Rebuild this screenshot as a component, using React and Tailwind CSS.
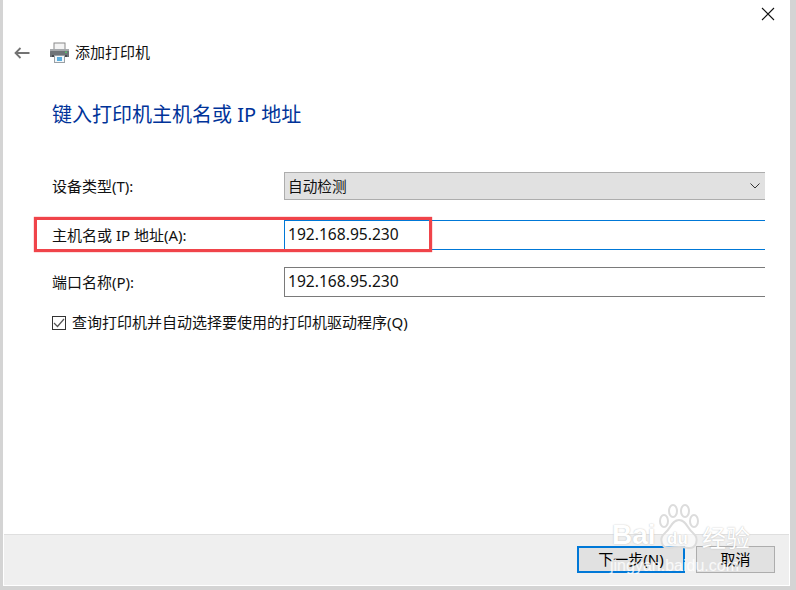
const font = "font-['Noto_Sans','Noto_Sans_CJK_SC',sans-serif]"

const Row = ({ label, children, className = '' }) => (
  <div className={`flex items-center ${className}`}>
    <div className="w-[232px] shrink-0 text-[15px] leading-none text-[#111]">{label}</div>
    {children}
  </div>
)

const PrinterIcon = () => (
  <svg width="21" height="21" viewBox="0 0 21 21">
    <rect x="5" y="1" width="11" height="7" fill="#f4f4f4" stroke="#8a8a8a" />
    <path d="M1 9.5 Q1 7 4 7 H17 Q20 7 20 9.5 V15 H1 Z" fill="#6f7478" />
    <rect x="1" y="7" width="19" height="2" fill="#a6a9ac" />
    <rect x="16" y="9.5" width="2" height="1.5" fill="#57c26b" />
    <rect x="3" y="13" width="15" height="2" fill="#44484c" />
    <rect x="5.5" y="13.5" width="10" height="7" fill="#f2f7fa" stroke="#9aa0a5" />
    <rect x="8" y="15" width="5" height="4" fill="#5aaede" />
  </svg>
)

const halo = '[text-shadow:0_0_1.5px_#b4b4b4]'

const Watermark = () => (
  <div className="absolute left-[610px] top-[502px] w-[150px] h-[80px] pointer-events-none text-white">
    <svg className="absolute left-[47px] top-[2px]" width="44" height="46" viewBox="0 0 44 46" fill="#ffffff" fillOpacity="0.55" stroke="#dcdcdc" strokeWidth="2">
      <ellipse cx="7" cy="17" rx="4" ry="6" />
      <ellipse cx="16" cy="7" rx="4" ry="6" />
      <ellipse cx="28" cy="7" rx="4" ry="6" />
      <ellipse cx="37" cy="17" rx="4" ry="6" />
      <path d="M22 16 C15 16 14 24 8 29 C1 35 5 45 13 44 C18 43 26 43 31 44 C39 45 43 35 36 29 C30 24 29 16 22 16 Z" />
    </svg>
    <span className={`absolute left-[2px] top-[17px] text-[28px] leading-[32px] font-bold font-['Liberation_Sans',sans-serif] ${halo}`}>Bai</span>
    <span className={`absolute left-[57px] top-[27px] text-[17px] leading-[20px] font-bold font-['Liberation_Sans',sans-serif] ${halo}`}>du</span>
    <span className={`absolute left-[92px] top-[20px] text-[24px] leading-[30px] font-['Noto_Sans_CJK_SC',sans-serif] ${halo}`}>经验</span>
    <span className="absolute left-[0px] top-[54px] text-[16px] leading-[20px] font-['Liberation_Sans',sans-serif] whitespace-nowrap text-white/80">jingyan.baidu.com</span>
  </div>
)

export default function App() {
  return (
    <div className={`relative w-[796px] h-[590px] overflow-hidden bg-[#d4d4d4] flex flex-col ${font}`}>
      <div className="flex-1 min-h-0 flex pl-[3px] pr-[6px] pb-[4px]">
        <div className="flex-1 bg-white flex flex-col">
          <div className="flex-1 relative">
            <div className="flex justify-end pt-[7px] pr-[15px] h-[36px]">
              <svg width="14" height="14" viewBox="0 0 14 14" stroke="#111" strokeWidth="1.1" fill="none">
                <path d="M1 1 L13 13 M13 1 L1 13" />
              </svg>
            </div>
            <div className="flex items-center h-[33px]">
              <svg className="ml-[11px]" width="16" height="12" viewBox="0 0 16 12" fill="none" stroke="#737373" strokeWidth="1.8">
                <path d="M15.5 6 H1.5 M6.5 1 L1.5 6 L6.5 11" />
              </svg>
              <div className="ml-[19px]"><PrinterIcon /></div>
              <span className="ml-[5px] text-[15px] leading-none text-[#111]">添加打印机</span>
            </div>
            <div className="ml-[49px] mt-[32px] text-[20px] leading-[28px] text-[#003399]">键入打印机主机名或 IP 地址</div>
            <div className="ml-[49px] mr-[25px] mt-[43px] flex flex-col">
              <Row label="设备类型(T):">
                <div className="flex-1 h-[28px] bg-[#e1e1e1] border-y border-l border-[#adadad] flex items-center justify-between pl-[3px] pr-[5px] text-[14.67px] text-[#111]">
                  <span>自动检测</span>
                  <svg width="10" height="6" viewBox="0 0 10 6" fill="none" stroke="#333" strokeWidth="1"><path d="M0.5 0.5 L5 5 L9.5 0.5" /></svg>
                </div>
              </Row>
              <Row label="主机名或 IP 地址(A):" className="mt-[20px]">
                <div className="flex-1 h-[30px] bg-white border-y border-l border-[#0078d7] flex items-center pl-[3px] text-[15.6px] text-[#111]">192.168.95.230</div>
              </Row>
              <Row label="端口名称(P):" className="mt-[17px]">
                <div className="flex-1 h-[30px] bg-white border-y border-l border-[#7a7a7a] flex items-center pl-[3px] text-[15.6px] text-[#111]">192.168.95.230</div>
              </Row>
              <div className="flex items-center mt-[18px]">
                <div className="w-[14px] h-[14px] border border-[#333] flex items-center justify-center">
                  <svg width="12" height="10" viewBox="0 0 12 10" fill="none" stroke="#555" strokeWidth="1.2"><path d="M1 5 L4.5 8.5 L11 1" /></svg>
                </div>
                <span className="ml-[6px] text-[15px] leading-none text-[#111]">查询打印机并自动选择要使用的打印机驱动程序(Q)</span>
              </div>
            </div>
          </div>
          <div className="h-[51px] mx-px mb-px bg-[#efefef] border-t border-[#dfdfdf] flex justify-end items-start pt-[11px] pr-[14px] gap-[11px]">
            <div className="w-[108px] h-[27px] bg-[#e1e1e1] border-2 border-[#0078d7] flex items-center justify-center text-[15px] leading-none text-black">下一步(N)</div>
            <div className="w-[79px] h-[27px] bg-[#e1e1e1] border border-[#adadad] flex items-center justify-center text-[15px] leading-none text-black">取消</div>
          </div>
        </div>
      </div>
      {/* red annotation over the hostname row */}
      <div className="absolute left-[34px] top-[217px] w-[398px] h-[35px] border-[3px] border-[#f0444a] shadow-[0_0_1px_#f0444a] pointer-events-none" />
      <Watermark />
    </div>
  )
}
